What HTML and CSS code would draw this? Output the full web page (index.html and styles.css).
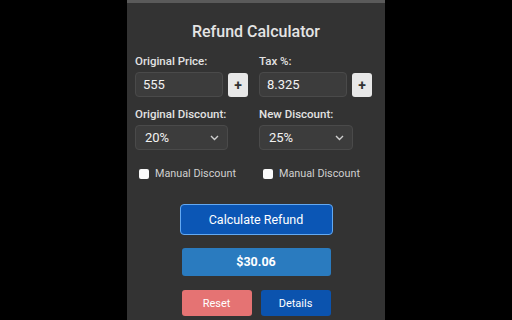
FILE: index.html
```html
<!DOCTYPE html>
<html>
<head>
<meta charset="utf-8">
<link rel="stylesheet" href="styles.css">
</head>
<body>
<div class="panel">
  <h1 class="title">Refund Calculator</h1>
  <div class="grid">
    <div class="field">
      <div class="label">Original Price:</div>
      <div class="input-row">
        <div class="input">555</div>
        <button class="plus">+</button>
      </div>
    </div>
    <div class="field">
      <div class="label">Tax %:</div>
      <div class="input-row">
        <div class="input">8.325</div>
        <button class="plus">+</button>
      </div>
    </div>
    <div class="field gap-top">
      <div class="label">Original Discount:</div>
      <div class="select select-a"><span>20%</span>
        <svg width="9" height="6" viewBox="0 0 9 6"><path d="M1 1 L4.5 4.5 L8 1" fill="none" stroke="#cfcfcf" stroke-width="1.4"/></svg>
      </div>
    </div>
    <div class="field gap-top">
      <div class="label">New Discount:</div>
      <div class="select select-b"><span>25%</span>
        <svg width="9" height="6" viewBox="0 0 9 6"><path d="M1 1 L4.5 4.5 L8 1" fill="none" stroke="#cfcfcf" stroke-width="1.4"/></svg>
      </div>
    </div>
    <label class="check"><span class="box"></span>Manual Discount</label>
    <label class="check"><span class="box"></span>Manual Discount</label>
  </div>
  <div class="actions">
    <button class="calc">Calculate Refund</button>
    <div class="result">$30.06</div>
    <div class="pair">
      <button class="reset">Reset</button>
      <button class="details">Details</button>
    </div>
  </div>
</div>
</body>
</html>
```

FILE: styles.css
```css
html, body {
  margin: 0;
  padding: 0;
  background: #000;
  height: 320px;
  overflow: hidden;
}
body {
  font-family: Roboto, "Liberation Sans", sans-serif;
  display: flex;
  justify-content: center;
}
.panel {
  width: 242px;
  height: 299px;
  background: #333333;
  border-top: 3px solid #5a5a5a;
  padding: 18px 8px 0 8px;
}
.title {
  margin: 0;
  font-size: 16px;
  line-height: 22px;
  font-weight: 500;
  color: #e4e4e4;
  text-align: center;
}
.grid {
  display: grid;
  grid-template-columns: 116px 116px;
  column-gap: 8px;
  margin-top: 10px;
}
.gap-top {
  margin-top: 9px;
}
.label {
  font-size: 11.5px;
  line-height: 16px;
  font-weight: 500;
  color: #e2e2e2;
  margin-bottom: 3px;
}
.input-row {
  display: flex;
  align-items: center;
  gap: 5px;
}
.input {
  width: 79px;
  height: 23px;
  background: #3c3c3c;
  border: 1px solid #4a4a4a;
  border-radius: 4px;
  padding: 0 0 0 7px;
  font-size: 13px;
  line-height: 23px;
  color: #f2f2f2;
}
.plus {
  width: 20px;
  height: 24px;
  padding: 0;
  border: none;
  border-radius: 3px;
  background: #e8e8e8;
  color: #333;
  font-family: Roboto, "Liberation Sans", sans-serif;
  font-size: 14px;
  font-weight: 700;
  line-height: 24px;
}
.select {
  height: 23px;
  background: #3c3c3c;
  border: 1px solid #4a4a4a;
  border-radius: 4px;
  padding: 0 8px 0 9px;
  display: flex;
  align-items: center;
  justify-content: space-between;
  font-size: 13px;
  color: #f2f2f2;
}
.select-a { width: 74px; }
.select-b { width: 75px; }
.check {
  display: flex;
  align-items: center;
  margin-top: 16px;
  padding-left: 4px;
  font-size: 10.8px;
  line-height: 16px;
  color: #d0d0d0;
}
.box {
  width: 10px;
  height: 10px;
  background: #fafafa;
  border-radius: 2px;
  margin-right: 6px;
}
.actions {
  display: flex;
  flex-direction: column;
  align-items: center;
  margin-top: 22px;
}
.calc {
  width: 153px;
  height: 31px;
  background: #0b56b5;
  border: 1.5px solid #63a9f2;
  border-radius: 4px;
  color: #fff;
  font-family: Roboto, "Liberation Sans", sans-serif;
  font-size: 12.5px;
  padding: 0;
}
.result {
  width: 149px;
  height: 28px;
  margin-top: 13px;
  background: #2a7bbf;
  border-radius: 3px;
  color: #fff;
  font-size: 12.5px;
  font-weight: 700;
  line-height: 28px;
  text-align: center;
}
.pair {
  display: flex;
  gap: 9px;
  margin-top: 14px;
}
.pair button {
  width: 70px;
  height: 26px;
  border: none;
  border-radius: 3px;
  color: #fff;
  font-family: Roboto, "Liberation Sans", sans-serif;
  font-size: 11px;
  padding: 0;
}
.reset { background: #e57373; }
.details { background: #0b53ae; }
```
